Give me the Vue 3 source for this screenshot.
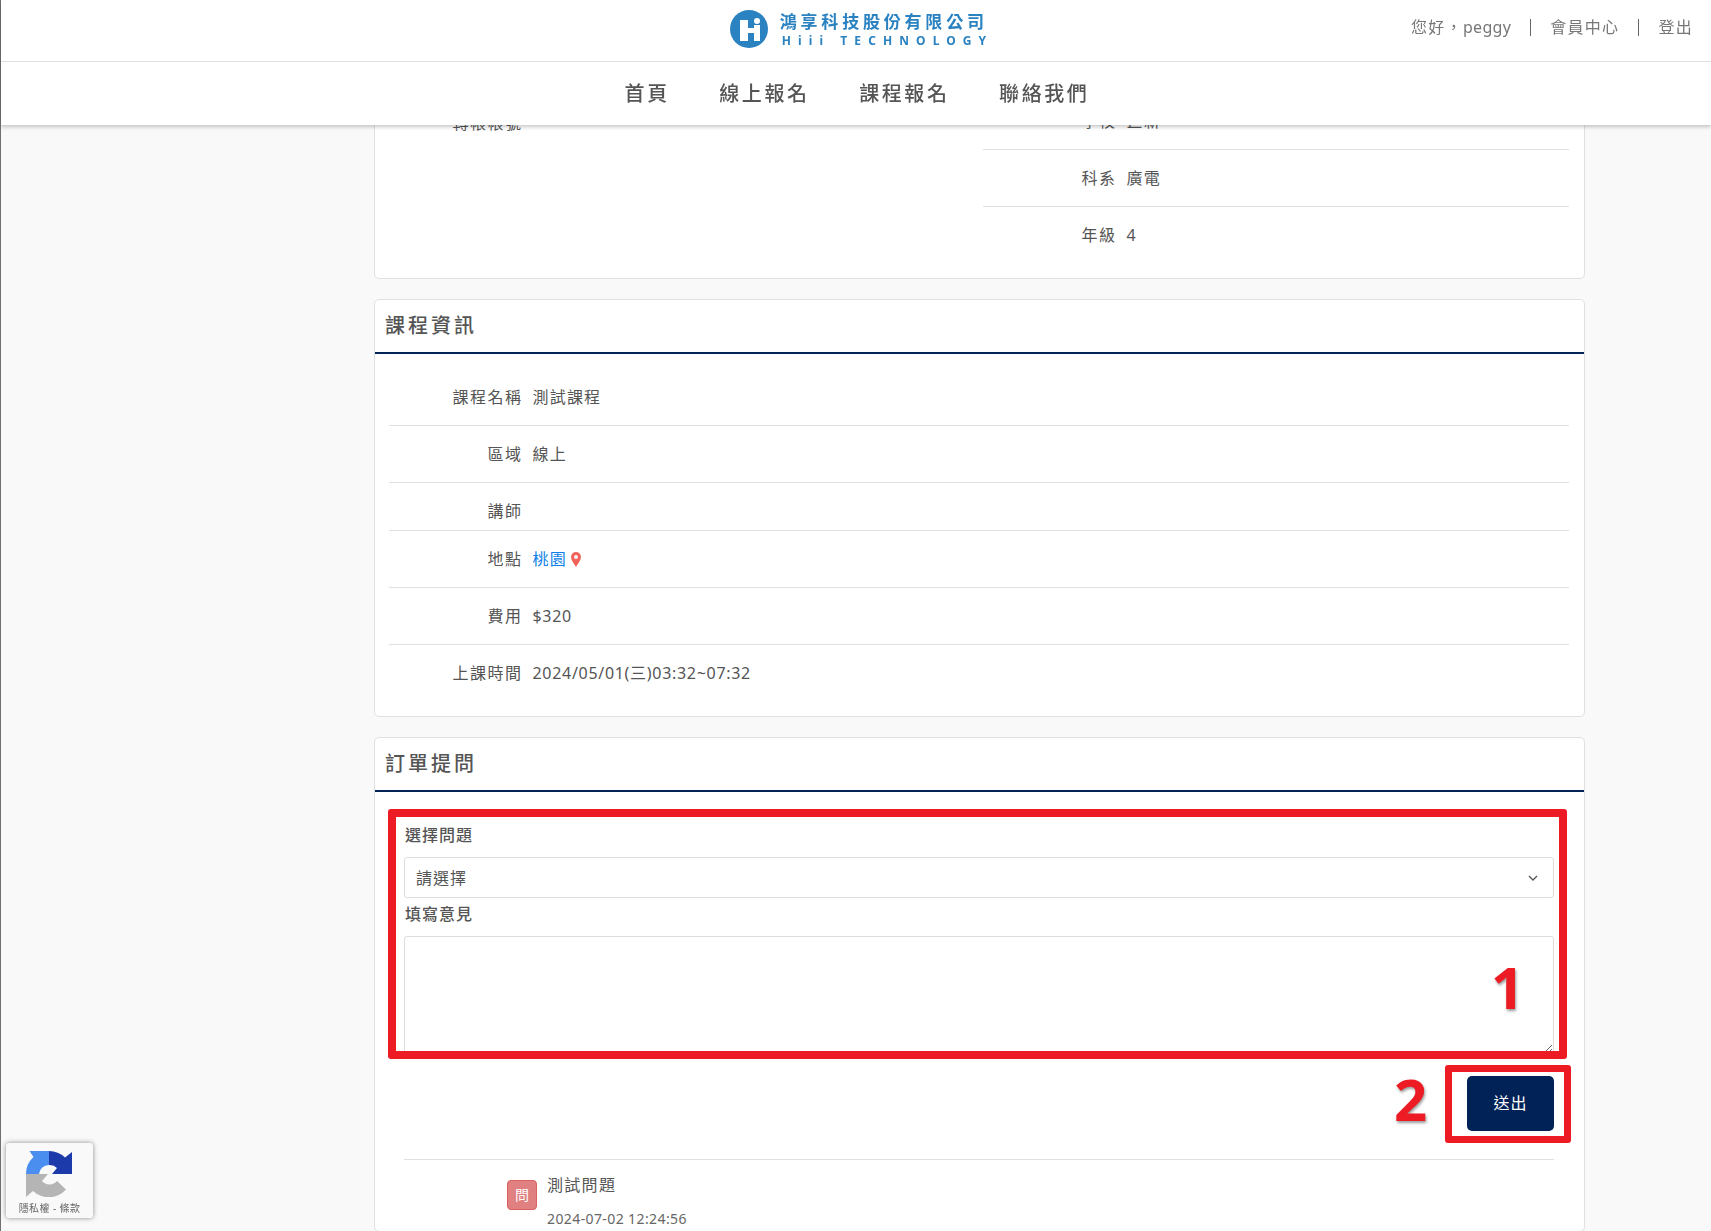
<script setup>
const leftRows = [{ label: '轉帳帳號', value: '' }]
const rightRows = [
  { label: '學校', value: '巨新' },
  { label: '科系', value: '廣電' },
  { label: '年級', value: '4', latin: true },
]
const courseRows = [
  { label: '課程名稱', value: '測試課程' },
  { label: '區域', value: '線上' },
  { label: '講師', value: '' },
  { label: '地點', value: '桃園', link: true },
  { label: '費用', value: '$320', latin: true },
  { label: '上課時間', value: '2024/05/01(三)03:32~07:32', latin: true },
]
const navItems = ['首頁', '線上報名', '課程報名', '聯絡我們']
</script>

<template>
  <div class="page">
    <header class="site-header">
      <div class="top-bar">
        <div class="logo">
          <svg class="logo-mark" viewBox="0 0 38 38" aria-hidden="true">
            <circle cx="19" cy="19" r="19" fill="#2a82c0" />
            <rect x="10" y="10" width="8" height="21" fill="#fff" />
            <rect x="17" y="18" width="8" height="5" fill="#fff" />
            <rect x="24" y="15" width="6" height="16" fill="#fff" />
            <circle cx="27" cy="11" r="3" fill="#fff" />
          </svg>
          <div class="logo-text">
            <div class="logo-cn">鴻享科技股份有限公司</div>
            <div class="logo-en">Hiii TECHNOLOGY</div>
          </div>
        </div>
        <div class="user-links">
          <span>您好，<span class="user-name">peggy</span></span>
          <i class="sep"></i>
          <span>會員中心</span>
          <i class="sep"></i>
          <span>登出</span>
        </div>
      </div>
      <nav class="main-nav">
        <a v-for="item in navItems" :key="item">{{ item }}</a>
      </nav>
    </header>

    <main class="content">
      <section class="card card-first">
        <div class="two-col">
          <div class="col-left">
            <div v-for="r in leftRows" :key="r.label" class="row no-line">
              <div class="row-label">{{ r.label }}</div>
            </div>
          </div>
          <div>
            <div v-for="r in rightRows" :key="r.label" class="row">
              <div class="row-label">{{ r.label }}</div>
              <div class="row-value" :class="{ latin: r.latin }">{{ r.value }}</div>
            </div>
          </div>
        </div>
      </section>

      <section class="card">
        <h2 class="card-title">課程資訊</h2>
        <div class="card-body">
          <div v-for="r in courseRows" :key="r.label" class="row">
            <div class="row-label">{{ r.label }}</div>
            <div v-if="r.value" class="row-value" :class="{ latin: r.latin }">
              <template v-if="r.link">
                <a class="place">{{ r.value }}</a>
                <svg class="pin" viewBox="0 0 10 15" aria-hidden="true">
                  <path fill-rule="evenodd" fill="#f2625a" d="M5 0a5 5 0 0 1 5 5c0 3.400-3.200 6.800-5 10C3.200 11.800 0 8.400 0 5a5 5 0 0 1 5-5Zm0 3a2 2 0 1 0 0 4 2 2 0 0 0 0-4Z" />
                </svg>
              </template>
              <template v-else>{{ r.value }}</template>
            </div>
          </div>
        </div>
      </section>

      <section class="card">
        <h2 class="card-title">訂單提問</h2>
        <div class="qa-form">
          <label class="form-label">選擇問題</label>
          <div class="select-wrap">
            <select class="control select">
              <option>請選擇</option>
            </select>
            <svg class="chevron" viewBox="0 0 10 6" aria-hidden="true">
              <path d="M1 1l4 4 4-4" fill="none" stroke="#555" stroke-width="1.300" />
            </svg>
          </div>
          <label class="form-label second">填寫意見</label>
          <textarea class="control textarea"></textarea>
          <div class="actions">
            <button class="submit" type="button">送出</button>
          </div>
          <div class="question">
            <div class="q-badge">問</div>
            <div>
              <div class="q-title">測試問題</div>
              <div class="q-date">2024-07-02 12:24:56</div>
            </div>
          </div>

          <div class="mark mark-form"></div>
          <div class="mark mark-btn"></div>
          <div class="digit digit-1">1</div>
          <div class="digit digit-2">2</div>
        </div>
      </section>
    </main>

    <aside class="recaptcha">
      <svg class="rc-logo" viewBox="0 0 46 46" aria-hidden="true">
        <path fill="#b5b5b5" d="M0 23H22L16 30A10 10 0 0 0 31 30L40 38.500A23 23 0 0 1 7 40L0 46Z" />
        <path fill="#4a8ef0" d="M0 23A23 23 0 0 1 7.500 6L3.500 0H23V14A10 10 0 0 0 13 23Z" />
        <path fill="#1c3aa9" d="M23 0A23 23 0 0 1 39 6.500L46 1V23H26L31 17A10 10 0 0 0 23 14Z" />
      </svg>
      <div class="rc-text">隱私權 - 條款</div>
    </aside>
  </div>
</template>

<style>
html, body { margin: 0; height: 100%; overflow: hidden; background: #f9f9f9; }
</style>

<style scoped>
.page {
  box-sizing: border-box;
  height: 1231px;
  overflow: hidden;
  background: #f9f9f9;
  border-left: 1px solid #707070;
  color: #555;
  font-family: "Noto Sans", "Noto Sans CJK TC", sans-serif;
  font-size: 16px;
  line-height: 24px;
  letter-spacing: 1px;
}
.site-header {
  position: fixed;
  top: 0;
  left: 1px;
  right: 0;
  z-index: 5;
  height: 125px;
  background: #fff;
  box-shadow: 0 2px 4px rgba(0, 0, 0, .22);
}
.top-bar {
  position: relative;
  height: 61px;
  border-bottom: 1px solid #e0e0e0;
  display: flex;
  justify-content: center;
}
.logo {
  display: flex;
  align-items: center;
  gap: 12px;
  margin-left: 11px;
  height: 58px;
}
.logo-mark { width: 38px; height: 38px; display: block; }
.logo-text { color: #2a82c0; font-weight: 700; padding-top: 2px; }
.logo-cn { font-size: 17px; line-height: 19px; letter-spacing: 3.800px; white-space: nowrap; }
.logo-en { font-size: 12px; line-height: 14px; letter-spacing: 7.100px; padding-left: 2px; white-space: nowrap; margin-top: 3px; }
.user-links {
  position: absolute;
  right: 18px;
  top: 15px;
  display: flex;
  align-items: center;
  color: #777;
  letter-spacing: 1.300px;
}
.user-name { letter-spacing: .3px; }
.sep { display: block; width: 1px; height: 17px; background: #666; margin: 0 19px; }
.main-nav {
  display: flex;
  justify-content: center;
  gap: 49.500px;
  padding: 17px 0 0 2px;
  font-size: 20px;
  line-height: 30px;
  letter-spacing: 2.600px;
  font-weight: 500;
}
.content { padding: 80px 0 0 373px; }
.card {
  box-sizing: border-box;
  width: 1211px;
  margin-bottom: 20px;
  background: #fff;
  border: 1px solid #e0e0e0;
  border-radius: 5px;
}
.card-first { padding: 12px 15px 15px 14px; }
.two-col { display: grid; grid-template-columns: 586px 586px; column-gap: 8px; }
.col-left { padding-top: 2px; }
.card-title {
  box-sizing: border-box;
  margin: 0;
  height: 54px;
  padding-left: 10px;
  border-bottom: 2px solid #012256;
  font-size: 20px;
  line-height: 52px;
  letter-spacing: 3px;
  font-weight: 500;
}
.card-body { padding: 15px 15px 15px 14px; }
.row {
  display: flex;
  padding-top: 16px;
  border-bottom: 1px solid #e0e0e0;
}
.row:last-child, .no-line { border-bottom: 0; }
.row-label {
  width: 133.500px;
  margin-right: 10px;
  margin-bottom: 7px;
  text-align: right;
  flex: none;
  letter-spacing: 1.500px;
}
.row-value { margin-bottom: 16px; display: flex; align-items: center; letter-spacing: 1.200px; }
.row-value.latin { letter-spacing: .7px; }
.place { color: #0d7fe8; }
.pin { width: 10px; height: 15px; margin-left: 4px; }
.qa-form { position: relative; margin: 30px 30px 0 29px; padding-top: 1px; }
.form-label { display: block; font-weight: 500; padding-left: 1px; }
.form-label.second { margin-top: 4px; }
.select-wrap { position: relative; margin-top: 10px; }
.control {
  display: block;
  box-sizing: border-box;
  width: 100%;
  background: #fff;
  border: 1px solid #ddd;
  border-radius: 3px;
  font: inherit;
  letter-spacing: inherit;
  color: inherit;
  outline: none;
}
.select { height: 41px; padding: 0 11px; appearance: none; }
.chevron { position: absolute; right: 16px; top: 18px; width: 10px; height: 6px; pointer-events: none; }
.textarea { height: 118px; margin-top: 10px; resize: vertical; }
.actions { display: flex; justify-content: flex-end; margin-top: 22px; padding-bottom: 28px; border-bottom: 1px solid #e0e0e0; }
.submit {
  width: 87px;
  height: 55px;
  padding: 0 0 2px;
  border: 0;
  border-radius: 5px;
  background: #012256;
  color: #fff;
  font: inherit;
  letter-spacing: inherit;
}
.question { display: flex; gap: 10px; padding: 13px 0 0 103px; align-items: flex-start; }
.q-badge {
  box-sizing: border-box;
  width: 30px;
  height: 30px;
  margin-top: 7px;
  border: 1px solid #d9605f;
  border-radius: 4px;
  background: #e08080;
  color: #fff;
  font-size: 14px;
  line-height: 28px;
  text-align: center;
  letter-spacing: 0;
}
.q-title { letter-spacing: 1.300px; }
.q-date { margin-top: 10px; font-size: 14px; letter-spacing: .4px; color: #666; }
.mark { position: absolute; box-sizing: border-box; border: 8px solid #ed1c24; border-radius: 3px; pointer-events: none; }
.mark-form { left: -16px; top: -13px; width: 1179px; height: 250px; }
.mark-btn { left: 1041px; top: 243px; width: 126px; height: 78px; border-width: 7px; }
.digit {
  position: absolute;
  font-family: "Open Sans", sans-serif;
  font-size: 58px;
  line-height: 58px;
  font-weight: 700;
  letter-spacing: 0;
  color: #ed1c24;
  -webkit-text-stroke: 4px #fff;
  paint-order: stroke fill;
  text-shadow: 1px 2px 3px rgba(0, 0, 0, .4);
}
.digit-1 { left: 1087px; top: 136px; }
.digit-2 { left: 990px; top: 248px; }
.recaptcha {
  position: fixed;
  left: 6px;
  top: 1143px;
  width: 87px;
  height: 75px;
  background: #f9f9f9;
  border-radius: 3px;
  box-shadow: 0 0 5px rgba(0, 0, 0, .45);
  text-align: center;
  z-index: 4;
}
.rc-logo { display: block; width: 46px; height: 46px; margin: 8px auto 0 auto; transform: translateX(-1px); }
.rc-text { font-size: 10px; line-height: 14px; letter-spacing: .4px; margin-top: 4px; color: #666; }
</style>
